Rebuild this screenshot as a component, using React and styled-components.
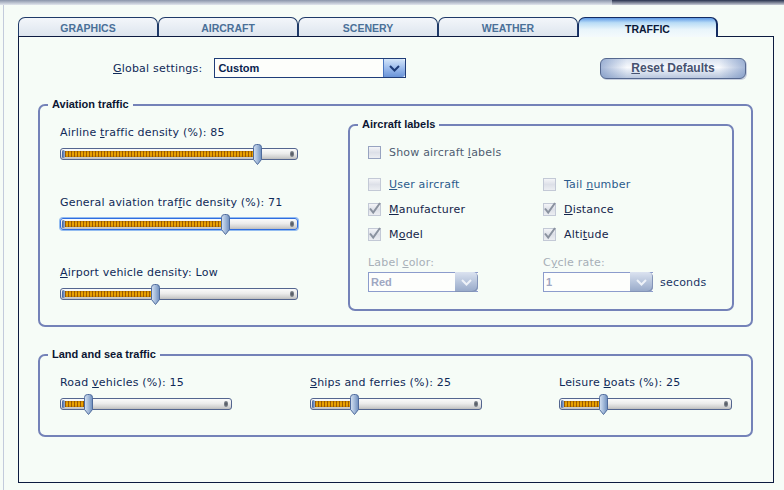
import React from "react";
import styled, { createGlobalStyle, css } from "styled-components";

const GlobalStyle = createGlobalStyle`
  html, body {
    margin: 0;
    padding: 0;
    background: #f6fcf7;
  }
  body {
    font-family: "DejaVu Sans", Verdana, sans-serif;
    font-size: 11px;
    color: #102a58;
  }
`;

const tabs = ["GRAPHICS", "AIRCRAFT", "SCENERY", "WEATHER", "TRAFFIC"];

function Thumb({ left }) {
  return (
    <ThumbBox style={{ left }}>
      <svg width="11" height="21" viewBox="0 0 11 21">
        <defs>
          <linearGradient id="thumbFill" x1="0" y1="0" x2="1" y2="0">
            <stop offset="0" stopColor="#d6e2f2" />
            <stop offset="0.45" stopColor="#a9bfdd" />
            <stop offset="1" stopColor="#6d8dbd" />
          </linearGradient>
        </defs>
        <path
          d="M1.5 3.5 Q1.5 0.5 4.5 0.5 H6.5 Q9.5 0.5 9.5 3.5 V15.5 L5.5 20.5 L1.5 15.5 Z"
          fill="url(#thumbFill)"
          stroke="#4f6b9c"
          strokeWidth="1"
        />
      </svg>
    </ThumbBox>
  );
}

function Slider({ width, value, focused }) {
  const center = 4 + (value / 100) * (width - 10);
  return (
    <SliderBody $width={width}>
      <Track $focused={focused}>
        <Fill style={{ width: center - 3 }} />
      </Track>
      <Thumb left={center - 5.5} />
    </SliderBody>
  );
}

function SliderField({ children, width = 238, value, focused }) {
  return (
    <FieldStack>
      <SliderLabel>{children}</SliderLabel>
      <Slider width={width} value={value} focused={focused} />
    </FieldStack>
  );
}

function Check({ checked, strong }) {
  return (
    <Box $strong={strong}>
      {checked && (
        <svg width="14" height="14" viewBox="0 0 14 14">
          <path d="M2 6.5 L5.2 10.5 L12 1" fill="none" stroke="#8a929f" strokeWidth="2" />
        </svg>
      )}
    </Box>
  );
}

function DropArrow({ color }) {
  return (
    <svg width="11" height="7" viewBox="0 0 11 7">
      <path d="M1 1 L5.5 5.5 L10 1" fill="none" stroke={color} strokeWidth="2" />
    </svg>
  );
}

export default function App() {
  return (
    <Screen>
      <GlobalStyle />
      <TopEdge>
        <span />
      </TopEdge>
      <Frame>
        <TabRow>
          {tabs.map((t) => (
            <Tab key={t} $active={t === "TRAFFIC"}>
              {t}
            </Tab>
          ))}
        </TabRow>
        <Panel>
          <SettingsRow>
            <FieldLabel>
              <Key>G</Key>lobal settings:
            </FieldLabel>
            <Select>
              <SelectValue>Custom</SelectValue>
              <DropButton>
                <DropArrow color="#1d3c78" />
              </DropButton>
            </Select>
            <ResetButton>
              <Key>R</Key>eset Defaults
            </ResetButton>
          </SettingsRow>

          <Group $width={715} $top={19}>
            <Legend>Aviation traffic</Legend>
            <AviationBody>
              <SliderColumn>
                <SliderField value={85}>
                  Airline <Key>t</Key>raffic density (%): 85
                </SliderField>
                <SliderField value={71} focused>
                  General aviation traf<Key>f</Key>ic density (%): 71
                </SliderField>
                <SliderField value={40}>
                  <Key>A</Key>irport vehicle density: Low
                </SliderField>
              </SliderColumn>

              <LabelsGroup>
                <Legend>Aircraft labels</Legend>
                <LabelsBody>
                  <ShowRow>
                    <Check strong />
                    <CheckText $tone="muted">
                      Show aircraft <Key>l</Key>abels
                    </CheckText>
                  </ShowRow>
                  <CheckGrid>
                    <CheckRow>
                      <Check />
                      <CheckText $tone="blue">
                        <Key>U</Key>ser aircraft
                      </CheckText>
                    </CheckRow>
                    <CheckRow>
                      <Check />
                      <CheckText $tone="blue">
                        Tail <Key>n</Key>umber
                      </CheckText>
                    </CheckRow>
                    <CheckRow>
                      <Check checked />
                      <CheckText>
                        <Key>M</Key>anufacturer
                      </CheckText>
                    </CheckRow>
                    <CheckRow>
                      <Check checked />
                      <CheckText>
                        <Key>D</Key>istance
                      </CheckText>
                    </CheckRow>
                    <CheckRow>
                      <Check checked />
                      <CheckText>
                        M<Key>o</Key>del
                      </CheckText>
                    </CheckRow>
                    <CheckRow>
                      <Check checked />
                      <CheckText>
                        Alti<Key>t</Key>ude
                      </CheckText>
                    </CheckRow>
                  </CheckGrid>
                  <OptionGrid>
                    <OptionCell>
                      <Caption>
                        Label <Key>c</Key>olor:
                      </Caption>
                      <DisabledSelect>
                        <DisabledValue>Red</DisabledValue>
                        <GrayDrop>
                          <DropArrow color="#eef2f8" />
                        </GrayDrop>
                      </DisabledSelect>
                    </OptionCell>
                    <OptionCell>
                      <Caption>
                        C<Key>y</Key>cle rate:
                      </Caption>
                      <InlineRow>
                        <DisabledSelect>
                          <DisabledValue>1</DisabledValue>
                          <GrayDrop>
                            <DropArrow color="#eef2f8" />
                          </GrayDrop>
                        </DisabledSelect>
                        <Unit>seconds</Unit>
                      </InlineRow>
                    </OptionCell>
                  </OptionGrid>
                </LabelsBody>
              </LabelsGroup>
            </AviationBody>
          </Group>

          <Group $width={715} $top={21}>
            <Legend>Land and sea traffic</Legend>
            <LandBody>
              <SliderField width={172} value={15}>
                Road <Key>v</Key>ehicles (%): 15
              </SliderField>
              <SliderField width={172} value={25}>
                <Key>S</Key>hips and ferries (%): 25
              </SliderField>
              <SliderField width={173} value={25}>
                Leisure <Key>b</Key>oats (%): 25
              </SliderField>
            </LandBody>
          </Group>
        </Panel>
      </Frame>
    </Screen>
  );
}

const Screen = styled.div`
  width: 784px;
  height: 490px;
  overflow: hidden;
  display: flex;
  flex-direction: column;
  background: #f6fcf7;
`;

const TopEdge = styled.div`
  flex: none;
  height: 5px;
  display: flex;
  background: linear-gradient(#8a94aa, #e2e7ed);

  span {
    margin-left: auto;
    width: 172px;
    background: linear-gradient(#27314d, #c9cdd8);
  }
`;

const Frame = styled.div`
  flex: 1;
  margin-left: 3px;
  border-left: 1px solid #c3cbdc;
  padding: 12px 0 0 14px;
`;

const TabRow = styled.div`
  display: flex;
  align-items: flex-end;
  height: 19px;
  position: relative;
  z-index: 1;
`;

const Tab = styled.div`
  box-sizing: border-box;
  width: 140px;
  height: 19px;
  display: flex;
  align-items: center;
  justify-content: center;
  border: 1px solid #1f3a68;
  border-bottom: none;
  border-radius: 7px 7px 0 0;
  background: linear-gradient(#f3f6fa, #dde5ee);
  font: bold 10.5px "Liberation Sans", Arial, sans-serif;
  color: #4a7098;
  padding-top: 2px;

  ${(p) =>
    p.$active &&
    css`
      height: 20px;
      margin-bottom: -1px;
      border-color: #142c62;
      border-width: 1px 2px 0 1px;
      background: linear-gradient(#5f9ae6, #b9dcf6 25%, #e9f5fb 60%, #f4fafc);
      color: #0a1838;
    `}
`;

const Panel = styled.div`
  box-sizing: border-box;
  width: 756px;
  height: 447px;
  border: 1px solid #0d1b40;
  background: #f6fcf7;
`;

const SettingsRow = styled.div`
  display: flex;
  align-items: center;
  height: 22px;
  margin-top: 20px;
  padding: 0 27px 0 94px;
`;

const Key = styled.u`
  text-decoration: underline;
`;

const FieldLabel = styled.span`
  margin-right: 12px;
  letter-spacing: 0.2px;
  color: #102a58;
`;

const Select = styled.div`
  box-sizing: border-box;
  width: 192px;
  height: 20px;
  display: flex;
  border: 1px solid #1f3d78;
  background: #fdfefb;
`;

const SelectValue = styled.span`
  flex: 1;
  padding-left: 3px;
  font: bold 11px/18px "Liberation Sans", Arial, sans-serif;
  color: #0a1f4e;
`;

const DropButton = styled.span`
  width: 21px;
  display: flex;
  align-items: center;
  justify-content: center;
  border-left: 1px solid #4a76c0;
  border-radius: 0 3px 3px 0;
  background: linear-gradient(#d4e6fa, #9cbcec 50%, #6a94d8);
`;

const ResetButton = styled.div`
  box-sizing: border-box;
  margin-left: auto;
  width: 146px;
  height: 21px;
  display: flex;
  align-items: center;
  justify-content: center;
  border: 1px solid #55688f;
  border-radius: 6px;
  background: linear-gradient(90deg, rgba(96, 128, 184, 0.55), rgba(255, 255, 255, 0) 18%, rgba(255, 255, 255, 0) 82%, rgba(96, 128, 184, 0.55)),
    linear-gradient(#d9e2f0, #f8fafd 45%, #e4eaf4 60%, #b9c7de);
  box-shadow: 1px 1px 0 #c8d0e0;
  font: bold 12px "Liberation Sans", Arial, sans-serif;
  color: #465270;
`;

const Group = styled.fieldset`
  box-sizing: border-box;
  width: ${(p) => p.$width}px;
  margin: ${(p) => p.$top}px 0 0 19px;
  padding: 0;
  min-width: 0;
  border: 2px solid #7482b8;
  border-radius: 7px;
`;

const Legend = styled.legend`
  margin-left: 8px;
  padding: 0 4px;
  font: bold 11px/13px "Liberation Sans", Arial, sans-serif;
  color: #0b1532;
`;

const AviationBody = styled.div`
  display: flex;
  align-items: flex-start;
  padding: 0 0 14px 20px;
`;

const SliderColumn = styled.div`
  width: 238px;
  padding-top: 15px;
  display: flex;
  flex-direction: column;
  gap: 31px;
`;

const FieldStack = styled.div`
  display: flex;
  flex-direction: column;
  gap: 4px;
`;

const SliderLabel = styled.span`
  line-height: 14px;
  letter-spacing: 0.2px;
  color: #102a58;
  white-space: nowrap;
`;

const SliderBody = styled.div`
  position: relative;
  width: ${(p) => p.$width}px;
  height: 21px;
`;

const Track = styled.div`
  position: relative;
  box-sizing: border-box;
  margin-top: 4px;
  height: 12px;
  display: flex;
  padding: 2px 0 2px 2px;
  border: 1px solid #53658f;
  border-radius: 3px;
  background: linear-gradient(#fbfbfb, #ececec 45%, #d2d2d2 80%, #bdbdbd);

  &::before {
    content: "";
    position: absolute;
    right: 3px;
    top: 2px;
    width: 4px;
    height: 6px;
    border-radius: 2px;
    background: radial-gradient(#4a4f58, #9aa0a8);
  }

  &::after {
    content: "";
    position: absolute;
    left: 1px;
    top: 1px;
    width: 3px;
    height: 8px;
    border-radius: 2px;
    background: linear-gradient(90deg, #3c5a92, #9ab4dc);
  }

  ${(p) =>
    p.$focused &&
    css`
      border-color: #2f6de0;
      box-shadow: 0 0 0 1px #93bcf0;
    `}
`;

const Fill = styled.div`
  height: 100%;
  background: linear-gradient(rgba(110, 60, 0, 0.35), rgba(0, 0, 0, 0) 30%, rgba(0, 0, 0, 0) 70%, rgba(110, 60, 0, 0.35)),
    repeating-linear-gradient(90deg, #e9a200 0 2px, #9c5a00 2px 3px);
`;

const ThumbBox = styled.div`
  position: absolute;
  top: 0;
  width: 11px;
  height: 21px;

  svg {
    display: block;
  }
`;

const LabelsGroup = styled.fieldset`
  box-sizing: border-box;
  width: 386px;
  margin: 7px 0 0 50px;
  padding: 0;
  min-width: 0;
  border: 2px solid #7482b8;
  border-radius: 7px;
`;

const LabelsBody = styled.div`
  padding: 13px 0 17px 18px;
`;

const ShowRow = styled.div`
  display: flex;
  align-items: center;
  gap: 8px;
  height: 16px;
  margin-bottom: 16px;
`;

const CheckGrid = styled.div`
  display: grid;
  grid-template-columns: 175px auto;
  row-gap: 9px;
`;

const CheckRow = styled.div`
  display: flex;
  align-items: center;
  gap: 8px;
  height: 16px;
`;

const Box = styled.span`
  position: relative;
  box-sizing: border-box;
  width: 13px;
  height: 13px;
  flex: none;
  border: 1px solid ${(p) => (p.$strong ? "#97a3c0" : "#c3c9d6")};
  background: linear-gradient(#f4f5f8, #dde0e8 50%, #eceef2);

  svg {
    position: absolute;
    left: -1px;
    top: -2px;
  }
`;

const toneColors = {
  muted: "#4f5c72",
  blue: "#2b5b8c",
  normal: "#14254a",
};

const CheckText = styled.span`
  letter-spacing: 0.2px;
  color: ${(p) => toneColors[p.$tone || "normal"]};
`;

const OptionGrid = styled.div`
  display: grid;
  grid-template-columns: 175px auto;
  margin-top: 14px;
`;

const OptionCell = styled.div`
  display: flex;
  flex-direction: column;
  gap: 2px;
`;

const Caption = styled.span`
  line-height: 14px;
  letter-spacing: 0.2px;
  color: #a7afb8;
`;

const InlineRow = styled.div`
  display: flex;
  align-items: center;
`;

const DisabledSelect = styled.div`
  box-sizing: border-box;
  width: 110px;
  height: 20px;
  display: flex;
  border: 1px solid #8c9ccc;
  border-right: none;
  background: #fdfefc;
`;

const DisabledValue = styled.span`
  flex: 1;
  padding-left: 2px;
  font: bold 11px/18px "Liberation Sans", Arial, sans-serif;
  color: #9fa7c2;
`;

const GrayDrop = styled.span`
  width: 23px;
  margin: -1px 0;
  display: flex;
  align-items: center;
  justify-content: center;
  border-radius: 0 5px 5px 0;
  background: linear-gradient(#dbe3f0, #b4c2da 55%, #96a8c8);
  box-shadow: inset -1px -1px 0 #8394b8;
`;

const Unit = styled.span`
  margin-left: 7px;
  letter-spacing: 0.2px;
  color: #1a3566;
`;

const LandBody = styled.div`
  display: grid;
  grid-template-columns: 250px 249px 173px;
  padding: 15px 0 20px 20px;
`;
